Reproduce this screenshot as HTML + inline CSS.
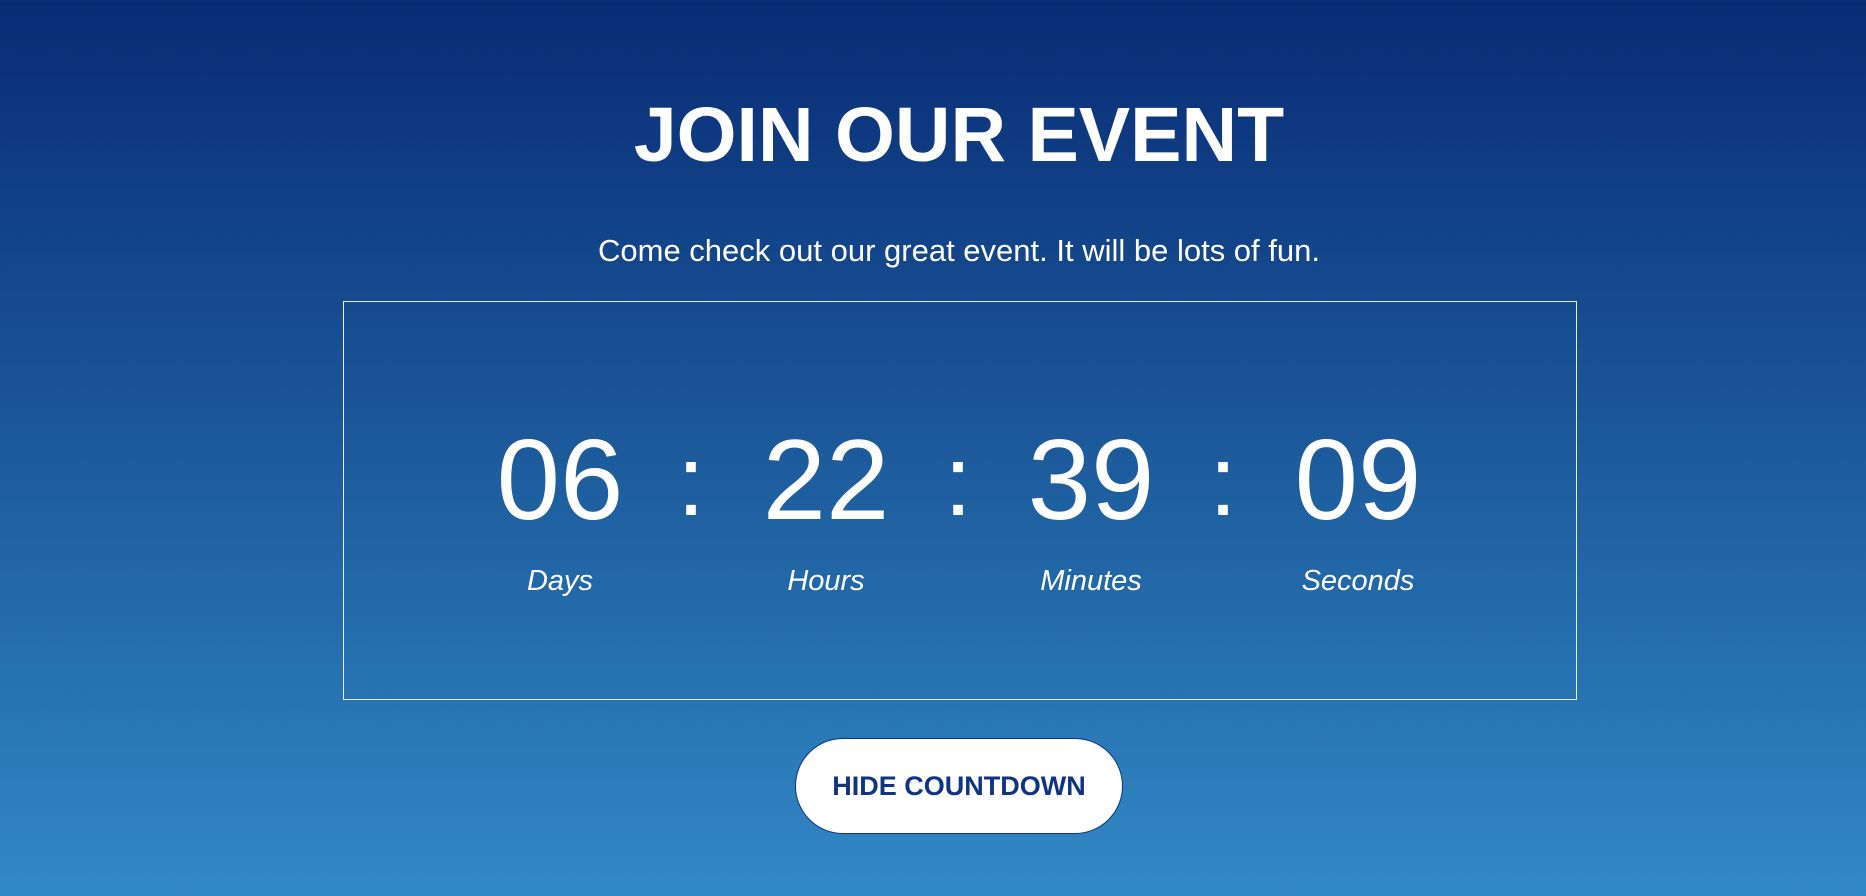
<!DOCTYPE html>
<html><head><meta charset="utf-8"><style>
html,body{margin:0;padding:0}
body{width:1866px;height:896px;overflow:hidden;position:relative;background:linear-gradient(to bottom,#082b74 0%,#1a5597 45%,#3189c5 100%);font-family:"Liberation Sans",Arial,sans-serif;color:#fff}
.t{position:absolute;left:26px;width:1866px;text-align:center;white-space:nowrap}
.box{position:absolute;left:343px;top:301px;width:1232px;height:397px;border:1px solid #e8eef8}
.n{position:absolute;top:416px;font-size:114px;line-height:130px;width:300px;text-align:center;margin-left:-150px}
.c{position:absolute;top:416px;font-size:100px;line-height:130px;width:40px;text-align:center;margin-left:-20px}
.l{position:absolute;top:563px;font-size:29px;font-style:italic;line-height:36px;width:300px;text-align:center;margin-left:-150px}
.btn{position:absolute;left:795px;top:738px;width:326px;height:94px;border:1px solid #0f3481;border-radius:48px;background:#fff;color:#0f3481;font-weight:bold;font-size:27px;line-height:94px;text-align:center}
</style></head><body>
<div class="t" style="top:90px;font-size:77px;font-weight:bold;line-height:90px">JOIN OUR EVENT</div>
<div class="t" style="top:234px;font-size:31px;line-height:34px">Come check out our great event. It will be lots of fun.</div>
<div class="box"></div>
<div class="n" style="left:560px">06</div>
<div class="c" style="left:691px">:</div>
<div class="n" style="left:826px">22</div>
<div class="c" style="left:958px">:</div>
<div class="n" style="left:1091px">39</div>
<div class="c" style="left:1223px">:</div>
<div class="n" style="left:1358px">09</div>
<div class="l" style="left:560px">Days</div>
<div class="l" style="left:826px">Hours</div>
<div class="l" style="left:1091px">Minutes</div>
<div class="l" style="left:1358px">Seconds</div>
<div class="btn">HIDE COUNTDOWN</div>
</body></html>
